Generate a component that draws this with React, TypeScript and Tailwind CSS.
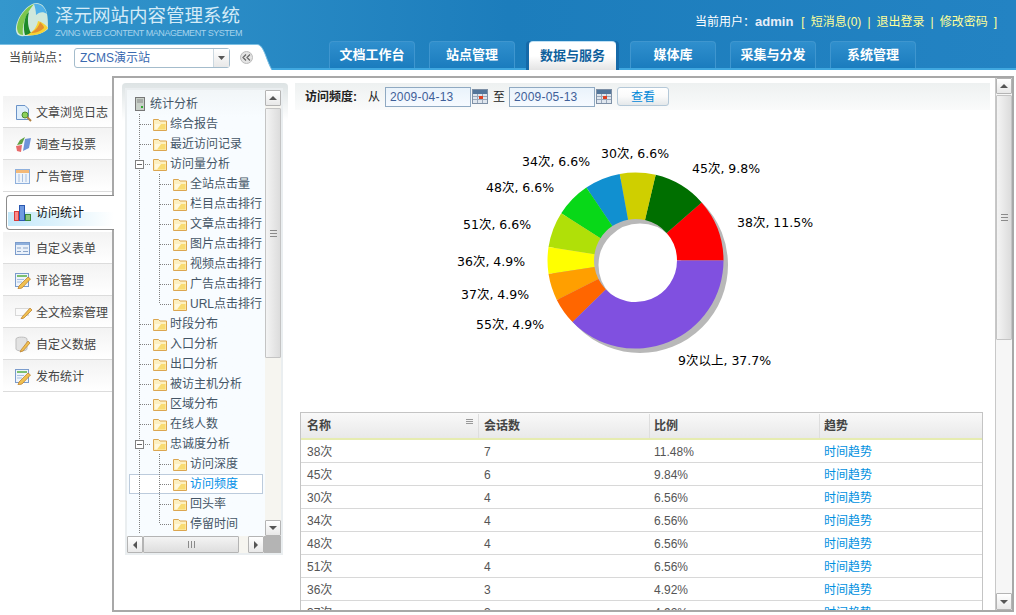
import { ReactNode } from 'react'

const CJK = '"Liberation Sans", "Noto Sans CJK SC", sans-serif'

const tabs = ['文档工作台', '站点管理', '数据与服务', '媒体库', '采集与分发', '系统管理']

const sideItems = [
  { label: '文章浏览日志', icon: 'log' },
  { label: '调查与投票', icon: 'vote' },
  { label: '广告管理', icon: 'ad' },
  { label: '访问统计', icon: 'chart', active: true },
  { label: '自定义表单', icon: 'form' },
  { label: '评论管理', icon: 'edit' },
  { label: '全文检索管理', icon: 'search' },
  { label: '自定义数据', icon: 'data' },
  { label: '发布统计', icon: 'edit' },
]

const treeItems = [
  { label: '综合报告', level: 1 },
  { label: '最近访问记录', level: 1 },
  { label: '访问量分析', level: 1, open: true },
  { label: '全站点击量', level: 2 },
  { label: '栏目点击排行', level: 2 },
  { label: '文章点击排行', level: 2 },
  { label: '图片点击排行', level: 2 },
  { label: '视频点击排行', level: 2 },
  { label: '广告点击排行', level: 2 },
  { label: 'URL点击排行', level: 2, last: true },
  { label: '时段分布', level: 1 },
  { label: '入口分析', level: 1 },
  { label: '出口分析', level: 1 },
  { label: '被访主机分析', level: 1 },
  { label: '区域分布', level: 1 },
  { label: '在线人数', level: 1 },
  { label: '忠诚度分析', level: 1, open: true },
  { label: '访问深度', level: 2 },
  { label: '访问频度', level: 2, selected: true },
  { label: '回头率', level: 2 },
  { label: '停留时间', level: 2, last: true },
]

const slices = [
  { pct: 11.48, color: '#ff0000' },
  { pct: 9.84, color: '#006f00' },
  { pct: 6.56, color: '#cfcf00' },
  { pct: 6.56, color: '#1190d0' },
  { pct: 6.56, color: '#08d818' },
  { pct: 6.56, color: '#b0e008' },
  { pct: 4.92, color: '#ffff00' },
  { pct: 4.92, color: '#ff9f00' },
  { pct: 4.92, color: '#ff6600' },
  { pct: 37.7, color: '#8050e0' },
]

const chartLabels = [
  { text: '38次, 11.5%', x: 737, y: 227 },
  { text: '45次, 9.8%', x: 692, y: 173 },
  { text: '30次, 6.6%', x: 601, y: 158 },
  { text: '34次, 6.6%', x: 522, y: 166 },
  { text: '48次, 6.6%', x: 486, y: 192 },
  { text: '51次, 6.6%', x: 463, y: 229 },
  { text: '36次, 4.9%', x: 457, y: 266 },
  { text: '37次, 4.9%', x: 461, y: 299 },
  { text: '55次, 4.9%', x: 476, y: 329 },
  { text: '9次以上, 37.7%', x: 678, y: 365 },
]

const rows = [
  ['38次', '7', '11.48%'],
  ['45次', '6', '9.84%'],
  ['30次', '4', '6.56%'],
  ['34次', '4', '6.56%'],
  ['48次', '4', '6.56%'],
  ['51次', '4', '6.56%'],
  ['36次', '3', '4.92%'],
  ['37次', '3', '4.92%'],
]

const Logo = () => (
  <svg width="34" height="36" viewBox="0 0 34 36">
    <path d="M21 1 C13 2 3 13 1 25 C0 32 4 35 9 34 C18 34 28 32 33 27 C33 18 33 10 29 5 C27 2 24 1 21 1Z" fill="#cfe8dc" />
    <path d="M19 2 C11 5 3 15 2 25 C2 30 4 33 8 33 C7 25 9 14 19 2Z" fill="#7cc64c" />
    <path d="M12 12 C9 18 8 26 10 33 C13 33 15 32 16 31 C13 26 12 18 14 10Z" fill="#1e8a2a" />
    <path d="M19 2 C25 1 30 5 32 12 C28 9 24 10 21 13 C21 9 20 5 19 2Z" fill="#4fb0e8" />
    <path d="M12 33 C18 30 22 25 23 19 C27 20 31 23 33 26 C28 32 20 34 12 33Z" fill="#f5d335" />
    <path d="M16 31 C21 28 24 24 25 20 C27 22 29 24 29 26 C25 30 20 31 16 31Z" fill="#e59030" />
  </svg>
)

const Folder = () => (
  <svg width="14" height="13" viewBox="0 0 14 13" className="shrink-0">
    <path d="M0.500 1.500 H5.500 L7 3 H13.500 V12.500 H0.500Z" fill="#fdf0c0" stroke="#dba650" />
    <path d="M1.500 6 H12.500 V11.500 H1.500Z" fill="#f9dc72" />
    <path d="M1.500 6 H8 L4 11.500 H1.500Z" fill="#fff8dc" />
  </svg>
)

const SideIcon = ({ kind }: { kind: string }) => {
  if (kind === 'log')
    return (
      <svg width="17" height="18" viewBox="0 0 17 18">
        <path d="M1.500 1.500 H10 L13.500 5 V15.500 H1.500Z" fill="#dfeefb" stroke="#6b93c8" />
        <circle cx="10" cy="11" r="3" fill="#8cd05a" stroke="#4a8a30" />
        <path d="M12 13 L16 17" stroke="#b08040" strokeWidth="2" />
      </svg>
    )
  if (kind === 'vote')
    return (
      <svg width="17" height="18" viewBox="0 0 17 18">
        <path d="M5 4 L10 1 L7 8 L2 9Z" fill="#5fa040" />
        <path d="M10 3 L16 2 L14 12 L8 15Z" fill="#6f93d8" />
        <path d="M1 10 L7 9 L6 16 L2 15Z" fill="#e86a6a" />
      </svg>
    )
  if (kind === 'ad')
    return (
      <svg width="15" height="15" viewBox="0 0 15 15">
        <rect x="0.500" y="0.500" width="14" height="14" fill="#eef4fb" stroke="#8fb0dc" />
        <rect x="1" y="1" width="13" height="3" fill="#f4b978" />
        <path d="M4 5 V13 M7.500 5 V13 M11 5 V13" stroke="#a8bfe0" />
      </svg>
    )
  if (kind === 'chart')
    return (
      <svg width="17" height="16" viewBox="0 0 17 16">
        <rect x="0.500" y="6.500" width="4" height="9" fill="#fb8a8a" stroke="#d83a3a" />
        <rect x="5.500" y="0.500" width="5" height="15" fill="#6f9ae0" stroke="#2b58b0" />
        <rect x="11.500" y="9.500" width="5" height="6" fill="#8cc47c" stroke="#3a8a3a" />
      </svg>
    )
  if (kind === 'form')
    return (
      <svg width="15" height="13" viewBox="0 0 15 13">
        <rect x="0.500" y="0.500" width="14" height="12" fill="#eaf1fa" stroke="#7b9ccc" />
        <rect x="1" y="1" width="13" height="2" fill="#8fb0dc" />
        <path d="M2 6 H6 M8 6 H13 M2 9.500 H6 M8 9.500 H13" stroke="#8aa4c8" />
      </svg>
    )
  if (kind === 'search')
    return (
      <svg width="18" height="13" viewBox="0 0 18 13">
        <rect x="0.500" y="2.500" width="13" height="7" fill="#fafafa" stroke="#d8d8d8" />
        <path d="M7 11 L15 2 L17 4 L9 12 L6 13Z" fill="#f0c050" stroke="#b87a28" strokeWidth="0.700" />
      </svg>
    )
  if (kind === 'data')
    return (
      <svg width="16" height="17" viewBox="0 0 16 17">
        <path d="M1 3 C1 0.500 12 0.500 12 3 V13 C12 15.500 1 15.500 1 13Z" fill="#e2e2e2" stroke="#bdbdbd" />
        <path d="M6 14 L13 5 L15 7 L8 15 L5 16Z" fill="#f0c050" stroke="#b87a28" strokeWidth="0.700" />
      </svg>
    )
  return (
    <svg width="16" height="16" viewBox="0 0 16 16">
      <rect x="0.500" y="0.500" width="13" height="13" fill="#eef4fb" stroke="#7b9ccc" />
      <path d="M2 3 H12" stroke="#7cc070" strokeWidth="2" />
      <path d="M2 6.500 H9 M2 9 H7" stroke="#a8bfe0" />
      <path d="M4 13 L13 4 L15.500 6 L7 15 L3 16Z" fill="#f0c050" stroke="#b87a28" strokeWidth="0.700" />
    </svg>
  )
}

const SideItem = ({ label, icon, active }: { label: string; icon: string; active?: boolean }) => {
  if (active) {
    return (
      <div className="relative z-10 ml-[3px] mr-[-2px] mt-[3px] mb-[2px] flex h-[35px] items-center rounded-l-[4px] border border-r-0 border-[#8c8c8c] bg-white pl-[7px]">
        <div className="absolute bottom-[3px] left-[1px] right-0 h-[14px] bg-gradient-to-r from-[#c4e8fa] via-[#dff3fc] to-white" />
        <div className="relative">
          <SideIcon kind={icon} />
        </div>
        <span className="relative ml-[5px] text-[12px] text-[#111]">{label}</span>
      </div>
    )
  }
  return (
    <div className="flex h-[32px] items-center border-b border-[#dcdcdc] bg-gradient-to-b from-[#f3f3f3] to-white pl-[12px] pt-[2px]">
      <span className="flex w-[21px] shrink-0 items-center">
        <SideIcon kind={icon} />
      </span>
      <span className="text-[12px] text-[#444]">{label}</span>
    </div>
  )
}

const TreeLines = ({ level, last, open }: { level: number; last?: boolean; open?: boolean }) => (
  <svg width={level === 1 ? 24 : 44} height="20" className="shrink-0">
    <g stroke="#808080" strokeDasharray="1 1">
      <path d="M10.500 0 V20" />
      {level === 1 && <path d={open ? 'M16 10.500 H22' : 'M11 10.500 H22'} />}
      {level === 2 && <path d={last ? 'M30.500 0 V10' : 'M30.500 0 V20'} />}
      {level === 2 && <path d="M31 10.500 H42" />}
    </g>
    {open && (
      <g>
        <rect x="6.500" y="6.500" width="8" height="8" fill="#fff" stroke="#808080" />
        <path d="M8 10.500 H13" stroke="#666" />
      </g>
    )}
  </svg>
)

const ArrowBtn = ({ dir, className }: { dir: 'up' | 'down' | 'left' | 'right'; className?: string }) => {
  const pts = { up: '3,9 11,9 7,5', down: '3,5 11,5 7,9', left: '9,3 9,11 5,7', right: '5,3 5,11 9,7' }[dir]
  return (
    <div className={`flex shrink-0 items-center justify-center rounded-[1px] border border-[#b4b4b4] bg-gradient-to-b from-white to-[#e8e8e8] ${className ?? ''}`}>
      <svg width="14" height="14" viewBox="0 0 14 14">
        <polygon points={pts} fill="#555" />
      </svg>
    </div>
  )
}

const Grip = ({ vertical }: { vertical?: boolean }) => (
  <svg width="9" height="9" viewBox="0 0 9 9">
    {vertical ? (
      <path d="M1.500 1 V8 M4.500 1 V8 M7.500 1 V8" stroke="#8a8a8a" />
    ) : (
      <path d="M1 1.500 H8 M1 4.500 H8 M1 7.500 H8" stroke="#8a8a8a" />
    )}
  </svg>
)

const Tree = () => (
  <div className="h-[472px] w-[166px] rounded-t-[4px] bg-gradient-to-b from-[#dde3e4] via-white via-[8%] to-white px-[3px] pt-[5px]">
    <div className="mr-[2px] flex h-[467px] flex-col border-2 border-[#eaeef0] bg-[#f6fbff]">
      <div className="flex min-h-0 flex-1">
        <div className="h-full w-[138px] overflow-hidden bg-gradient-to-b from-[#f2f6f8] to-[#f8fcff] via-[#f8fcff] via-[6%] pl-[2px] pt-[4px]">
          <div className="flex h-[20px] items-center pl-[5px]">
            <svg width="12" height="14" viewBox="0 0 12 14">
              <rect x="1.500" y="0.500" width="9" height="13" fill="#c8d0c8" stroke="#777" />
              <path d="M3 3 H9 M3 5 H9" stroke="#888" />
              <rect x="7" y="9" width="2" height="2" fill="#3a3" />
            </svg>
            <span className="ml-[4px] text-[12px] text-[#445566]">统计分析</span>
          </div>
          {treeItems.map((item) => (
            <div
              key={item.label}
              className={`flex h-[20px] items-center ${item.selected ? 'relative w-[134px] border border-[#bccbdc] bg-white' : ''}`}
            >
              <div className={`flex items-center ${item.selected ? '-ml-[1px]' : ''}`}>
                <TreeLines level={item.level} last={item.last} open={item.open} />
              </div>
              <Folder />
              <span
                className={`ml-[3px] whitespace-nowrap text-[12px] ${item.selected ? 'text-[#0090e8]' : 'text-[#445566]'}`}
              >
                {item.label}
              </span>
            </div>
          ))}
        </div>
        <div className="flex w-[16px] flex-col bg-[#f6f5f0]">
          <ArrowBtn dir="up" className="h-[16px]" />
          <div className="mt-[2px] flex h-[250px] items-center justify-center rounded-[1px] border border-[#c4c4c4] bg-gradient-to-r from-[#f4f4f4] to-[#dcdcdc]">
            <Grip />
          </div>
          <div className="flex-1" />
          <ArrowBtn dir="down" className="h-[16px]" />
        </div>
      </div>
      <div className="flex h-[17px] shrink-0 bg-[#f6f5f0]">
        <ArrowBtn dir="left" className="w-[16px]" />
        <div className="flex w-[96px] items-center justify-center rounded-[1px] border border-[#b4b4b4] bg-gradient-to-b from-[#f4f4f4] to-[#dedede]">
          <Grip vertical />
        </div>
        <div className="w-[9px]" />
        <ArrowBtn dir="right" className="w-[16px]" />
        <div className="flex-1 bg-[#b4b4b4]" />
      </div>
    </div>
  </div>
)

const CalendarIcon = () => (
  <svg width="16" height="15" viewBox="0 0 16 15" className="shrink-0">
    <rect x="0.500" y="0.500" width="15" height="14" fill="#dfe6ee" stroke="#7e90a6" />
    <rect x="1" y="1" width="14" height="4" fill="#54769a" />
    <path d="M1 7.500 H15 M1 10.500 H15 M5.500 5 V14 M10.500 5 V14" stroke="#9aa8ba" />
    <rect x="7" y="7" width="4" height="3" fill="#e04020" />
  </svg>
)

const DateField = ({ value, className }: { value: string; className?: string }) => (
  <div className={`flex h-[20px] w-[86px] items-center border border-[#8fa9c2] bg-gradient-to-b from-[#eaf3fb] to-[#f6faff] pl-[4px] text-[12px] tracking-[0.2px] text-[#3f5f99] ${className ?? ''}`}>
    {value}
  </div>
)

const Toolbar = () => (
  <div className="flex h-[27px] items-center bg-gradient-to-b from-[#eef1f1] to-[#fafbfb] text-[12px] text-[#222]">
    <span className="ml-[10px] w-[63px] font-bold">访问频度:</span>
    <span className="w-[17px]">从</span>
    <DateField value="2009-04-13" />
    <span className="ml-[1px]">
      <CalendarIcon />
    </span>
    <span className="ml-[5px] w-[16px]">至</span>
    <DateField value="2009-05-13" />
    <span className="ml-[1px]">
      <CalendarIcon />
    </span>
    <div className="ml-[5px] flex h-[19px] w-[52px] items-center justify-center rounded-[3px] border border-[#b4c8d8] bg-gradient-to-b from-white via-[#fafafa] to-[#e4e8ea] text-[#0088d8]">
      查看
    </div>
  </div>
)

const polar = (cx: number, cy: number, r: number, angle: number) => [
  cx + r * Math.cos(angle),
  cy - r * Math.sin(angle),
]

const DonutChart = () => {
  const cx = 635.5
  const cy = 260.5
  const outer = 88
  const inner = 41.5
  let start = 0
  const total = slices.reduce((acc, slice) => acc + slice.pct, 0)
  const paths = slices.map((slice) => {
    const end = start + (slice.pct / total) * Math.PI * 2
    const [ox1, oy1] = polar(cx, cy, outer, start)
    const [ox2, oy2] = polar(cx, cy, outer, end)
    const [ix1, iy1] = polar(cx, cy, inner, start)
    const [ix2, iy2] = polar(cx, cy, inner, end)
    const large = end - start > Math.PI ? 1 : 0
    start = end
    return {
      color: slice.color,
      d: `M${ox1} ${oy1} A${outer} ${outer} 0 ${large} 0 ${ox2} ${oy2} L${ix2} ${iy2} A${inner} ${inner} 0 ${large} 1 ${ix1} ${iy1}Z`,
    }
  })

  return (
    <svg width="695" height="302" viewBox="295 110 695 302" className="block">
      <circle cx={cx + 4.5} cy={cy + 4.5} r={(outer + inner) / 2} fill="none" stroke="#b8b8b8" strokeWidth={outer - inner} />
      {paths.map((p) => (
        <path key={p.d} d={p.d} fill={p.color} />
      ))}
      {chartLabels.map((label) => (
        <text
          key={label.text}
          x={label.x}
          y={label.y}
          fontSize="12.5"
          fill="#000"
          style={{ fontFamily: '"DejaVu Sans", "Noto Sans CJK SC", sans-serif' }}
        >
          {label.text}
        </text>
      ))}
    </svg>
  )
}

const Cell = ({ w, children, className }: { w: string; children: ReactNode; className?: string }) => (
  <div className={`${w} shrink-0 ${className ?? ''}`}>{children}</div>
)

const DataTable = () => (
  <div className="ml-[5px] w-[683px] border-x border-t border-[#c4c4c4] text-[12px]">
    <div className="flex h-[27px] items-center border-b-2 border-[#e6ecb0] bg-gradient-to-b from-[#f9f9f9] to-[#e9e9e9] pt-[1px] font-bold text-[#444]">
      <Cell w="w-[178px]" className="relative flex h-full items-center border-r border-[#dedede] pl-[6px]">
        名称
        <span className="absolute right-[5px] top-[4px]">
          <svg width="7" height="7" viewBox="0 0 7 7">
            <path d="M0 1.500 H7 M0 3.500 H7 M0 5.500 H7" stroke="#999" />
          </svg>
        </span>
      </Cell>
      <Cell w="w-[171px]" className="flex h-full items-center border-r border-[#dedede] pl-[5px]">
        会话数
      </Cell>
      <Cell w="w-[170px]" className="flex h-full items-center border-r border-[#dedede] pl-[4px]">
        比例
      </Cell>
      <Cell w="flex-1" className="pl-[4px]">
        趋势
      </Cell>
    </div>
    {rows.map((row) => (
      <div key={row[0]} className="flex h-[23px] items-center border-b border-[#d8d8d8] pt-[2px] text-[#555]">
        <Cell w="w-[178px]" className="pl-[6px]">
          {row[0]}
        </Cell>
        <Cell w="w-[171px]" className="pl-[5px]">
          {row[1]}
        </Cell>
        <Cell w="w-[170px]" className="pl-[4px]">
          {row[2]}
        </Cell>
        <Cell w="flex-1" className="pl-[4px] text-[#0090e0]">
          时间趋势
        </Cell>
      </div>
    ))}
  </div>
)

const App = () => (
  <div className="flex h-[615px] w-[1016px] flex-col overflow-hidden bg-white" style={{ fontFamily: CJK }}>
    <header className="h-[70px] shrink-0 bg-gradient-to-r from-[#3497cd] via-[#1c7dbc] to-[#2383c3]">
      <div className="flex h-[41px] items-start">
        <div className="ml-[15px] mt-[2px] w-[40px]">
          <Logo />
        </div>
        <div className="w-[190px] pt-[6px]">
          <div className="whitespace-nowrap text-[18.5px] leading-[20px] text-[#d4ebf7]">泽元网站内容管理系统</div>
          <div className="mt-[2px] whitespace-nowrap text-[9px] leading-[10px] tracking-[-0.45px] text-[#a6d3ec]">
            ZVING WEB CONTENT MANAGEMENT SYSTEM
          </div>
        </div>
        <div className="ml-auto mr-[19px] mt-[14px] flex h-[16px] items-center whitespace-nowrap text-[12px] text-white">
          当前用户：<b className="text-[13px] text-[#e8eef8]">admin</b>
          <span className="ml-[8px] flex gap-[6px] text-[#ffff99]">
            <span>[</span>
            <span>短消息(0)</span>
            <span>|</span>
            <span>退出登录</span>
            <span>|</span>
            <span>修改密码</span>
            <span>]</span>
          </span>
        </div>
      </div>
      <div className="flex h-[29px] items-end">
        <div className="flex h-[26px] w-[257px] shrink-0 items-center border-t border-[#7cc0e4] bg-white pl-[9px] text-[12px] text-[#444]">
          <span className="w-[65px]">当前站点：</span>
          <div className="flex h-[20px] w-[156px] items-center justify-between rounded-[3px] border border-[#a4bccc] pl-[5px] text-[#3a6ab0]">
            ZCMS演示站
            <span className="flex h-full w-[16px] items-center justify-center border-l border-[#ccd8e0] bg-gradient-to-b from-white to-[#e8e8e8]">
              <svg width="7" height="4" viewBox="0 0 7 4">
                <polygon points="0,0 7,0 3.500,4" fill="#555" />
              </svg>
            </span>
          </div>
          <span className="ml-[10px] flex h-[13px] w-[13px] items-center justify-center rounded-full border border-[#bbb] bg-[#e4e4e4]">
            <svg width="9" height="7" viewBox="0 0 9 7">
              <path d="M4 0.500 L1 3.500 L4 6.500 M8 0.500 L5 3.500 L8 6.500" fill="none" stroke="#666" strokeWidth="1.200" />
            </svg>
          </span>
        </div>
        <svg width="15" height="26" viewBox="0 0 15 26" className="shrink-0">
          <path d="M0 0.500 C7 0.500 9 16 15 26 H0Z" fill="#fff" />
          <path d="M0 0.500 C7 0.500 9 16 15 26" fill="none" stroke="#7cc0e4" />
        </svg>
        <div className="flex h-[29px] flex-1 items-end gap-[14px] border-b-2 border-[#40a8e0] pl-[57px]">
          {tabs.map((tab) =>
            tab === '数据与服务' ? (
              <div
                key={tab}
                className="relative z-10 -mb-[2px] flex h-[29px] w-[87px] items-center justify-center rounded-t-[4px] border-t border-[#bfe0f4] bg-gradient-to-b from-white via-white to-[#e4e4e4] text-[13px] font-bold text-[#0e5f9c] shadow-[3px_0_0_#1569a8,-3px_0_0_#1569a8]"
              >
                {tab}
              </div>
            ) : (
              <div
                key={tab}
                className="flex h-[27px] w-[86px] items-center justify-center rounded-t-[4px] border border-b-0 border-[#3f96cf] bg-gradient-to-b from-[#2f8fcd] to-[#1a7cbe] text-[13px] font-bold text-white"
              >
                {tab}
              </div>
            ),
          )}
        </div>
      </div>
    </header>

    <div className="flex min-h-0 flex-1 pt-[6px]">
      <aside className="w-[112px] shrink-0 pl-[3px] pt-[20px]">
        {sideItems.map((item) => (
          <SideItem key={item.label} {...item} />
        ))}
      </aside>
      <main className="mb-[3px] flex h-[536px] w-[902px] overflow-hidden border-2 border-[#a8a8a8]">
        <div className="ml-[8px] w-[166px] shrink-0 pt-[5px]">
          <Tree />
        </div>
        <div className="ml-[7px] w-[695px] shrink-0 pt-[5px]">
          <Toolbar />
          <DonutChart />
          <DataTable />
        </div>
        <div className="ml-[5px] flex w-[17px] shrink-0 flex-col border-l border-[#c8c8c8] bg-[#f6f6f6]">
          <ArrowBtn dir="up" className="h-[16px]" />
          <div className="mt-[1px] flex h-[245px] items-center justify-center rounded-[1px] border border-[#c4c4c4] bg-gradient-to-r from-[#f4f4f4] to-[#dcdcdc]">
            <Grip />
          </div>
          <div className="flex-1" />
          <ArrowBtn dir="down" className="h-[17px]" />
        </div>
      </main>
    </div>
  </div>
)

export default App
